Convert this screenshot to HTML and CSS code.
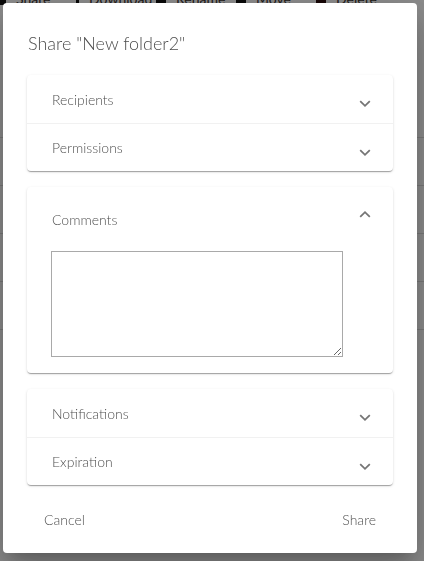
FILE: index.html
```html
<!DOCTYPE html>
<html lang="en">
<head>
<meta charset="utf-8">
<title>Share dialog</title>
<link rel="stylesheet" href="styles.css">
</head>
<body>
  <div class="page">
    <div class="toolbar">
      <span class="tool"><span class="tool-icon"></span>Share</span>
      <span class="tool"><span class="tool-icon thin"></span>Download</span>
      <span class="tool"><span class="tool-icon"></span>Rename</span>
      <span class="tool"><span class="tool-icon"></span>Move</span>
      <span class="tool"><span class="tool-icon red"></span>Delete</span>
    </div>
    <div class="table">
      <div class="row"></div>
      <div class="row"></div>
      <div class="row"></div>
      <div class="row"></div>
      <div class="row"></div>
    </div>
  </div>
  <div class="backdrop"></div>

  <div class="dialog" role="dialog">
    <h2 class="dialog-title">Share "New folder2"</h2>
    <div class="dialog-content">
      <div class="card">
        <div class="summary">
          <span class="label">Recipients</span>
          <svg class="chev" viewBox="0 0 24 24" width="24" height="24"><polyline points="7.2,14.2 12,18.8 16.8,14.2"/></svg>
        </div>
        <div class="summary divided">
          <span class="label">Permissions</span>
          <svg class="chev" viewBox="0 0 24 24" width="24" height="24"><polyline points="7.2,14.2 12,18.8 16.8,14.2"/></svg>
        </div>
      </div>
      <div class="card">
        <div class="summary expanded">
          <span class="label">Comments</span>
          <svg class="chev up" viewBox="0 0 24 24" width="24" height="24"><polyline points="7.2,14.2 12,18.8 16.8,14.2"/></svg>
        </div>
        <div class="details">
          <textarea class="comment-box"></textarea>
        </div>
      </div>
      <div class="card">
        <div class="summary">
          <span class="label">Notifications</span>
          <svg class="chev" viewBox="0 0 24 24" width="24" height="24"><polyline points="7.2,14.2 12,18.8 16.8,14.2"/></svg>
        </div>
        <div class="summary divided">
          <span class="label">Expiration</span>
          <svg class="chev" viewBox="0 0 24 24" width="24" height="24"><polyline points="7.2,14.2 12,18.8 16.8,14.2"/></svg>
        </div>
      </div>
    </div>
    <div class="dialog-actions">
      <button class="btn" type="button">Cancel</button>
      <button class="btn" type="button">Share</button>
    </div>
  </div>
</body>
</html>
```

FILE: styles.css
```css
html, body {
  margin: 0;
  padding: 0;
  height: 100%;
  overflow: hidden;
}

body {
  font-family: Lato, "Open Sans", sans-serif;
  background: #ffffff;
}

.page {
  background: #ffffff;
}

.toolbar {
  display: flex;
  align-items: center;
  height: 28px;
  margin-top: -16px;
  font-size: 14px;
  color: #3a3330;
}

.tool {
  display: flex;
  align-items: center;
  gap: 10px;
  margin-left: -4px;
  width: 84px;
}

.tool-icon {
  width: 10px;
  height: 14px;
  background: #111;
}

.tool-icon.thin {
  width: 3px;
}

.tool-icon.red {
  background: #2a0a0a;
}

.table {
  margin-top: 78px;
}

.row {
  height: 47px;
  border-bottom: 1px solid #dddddd;
}

.backdrop {
  position: fixed;
  inset: 0;
  background: rgba(0, 0, 0, 0.45);
}

.dialog {
  position: fixed;
  left: 3px;
  top: 3px;
  width: 414px;
  height: 550px;
  box-sizing: border-box;
  background: #ffffff;
  border-radius: 4px;
  display: flex;
  flex-direction: column;
  box-shadow: 0 11px 15px -7px rgba(0, 0, 0, 0.2),
              0 24px 38px 3px rgba(0, 0, 0, 0.14),
              0 9px 46px 8px rgba(0, 0, 0, 0.12);
}

.dialog-title {
  margin: 0;
  padding: 24px 24px 16px 25px;
  font-size: 18px;
  line-height: 32px;
  font-weight: 300;
  color: #4d4d4d;
}

.dialog-content {
  padding: 0 24px;
  display: flex;
  flex-direction: column;
  gap: 16px;
}

.card {
  background: #ffffff;
  border-radius: 4px;
  box-shadow: 0 2px 1px -1px rgba(0, 0, 0, 0.2),
              0 1px 1px 0 rgba(0, 0, 0, 0.14),
              0 1px 3px 0 rgba(0, 0, 0, 0.12);
}

.summary {
  height: 48px;
  box-sizing: border-box;
  display: flex;
  align-items: center;
  justify-content: space-between;
  padding: 0 16px 0 25px;
}

.summary.divided {
  border-top: 1px solid #f1f1f1;
}

.summary.expanded {
  height: 64px;
}

.label {
  font-size: 14px;
  font-weight: 300;
  color: #505050;
}

.chev {
  display: block;
  fill: none;
  stroke: #757575;
  stroke-width: 1.8;
}

.chev.up {
  transform: rotate(180deg);
}

.details {
  padding: 0 24px 16px;
}

.comment-box {
  display: block;
  width: 292px;
  height: 106px;
  box-sizing: border-box;
  margin: 0;
  border: 1px solid #a9a9a9;
  background: #ffffff;
  font-family: Lato, sans-serif;
  font-size: 14px;
}

.dialog-actions {
  display: flex;
  justify-content: space-between;
  align-items: center;
  padding: 16px 33px;
}

.btn {
  height: 36px;
  padding: 0 8px;
  border: 0;
  background: none;
  font-family: Lato, "Open Sans", sans-serif;
  font-size: 14px;
  font-weight: 300;
  color: #505050;
}
```
